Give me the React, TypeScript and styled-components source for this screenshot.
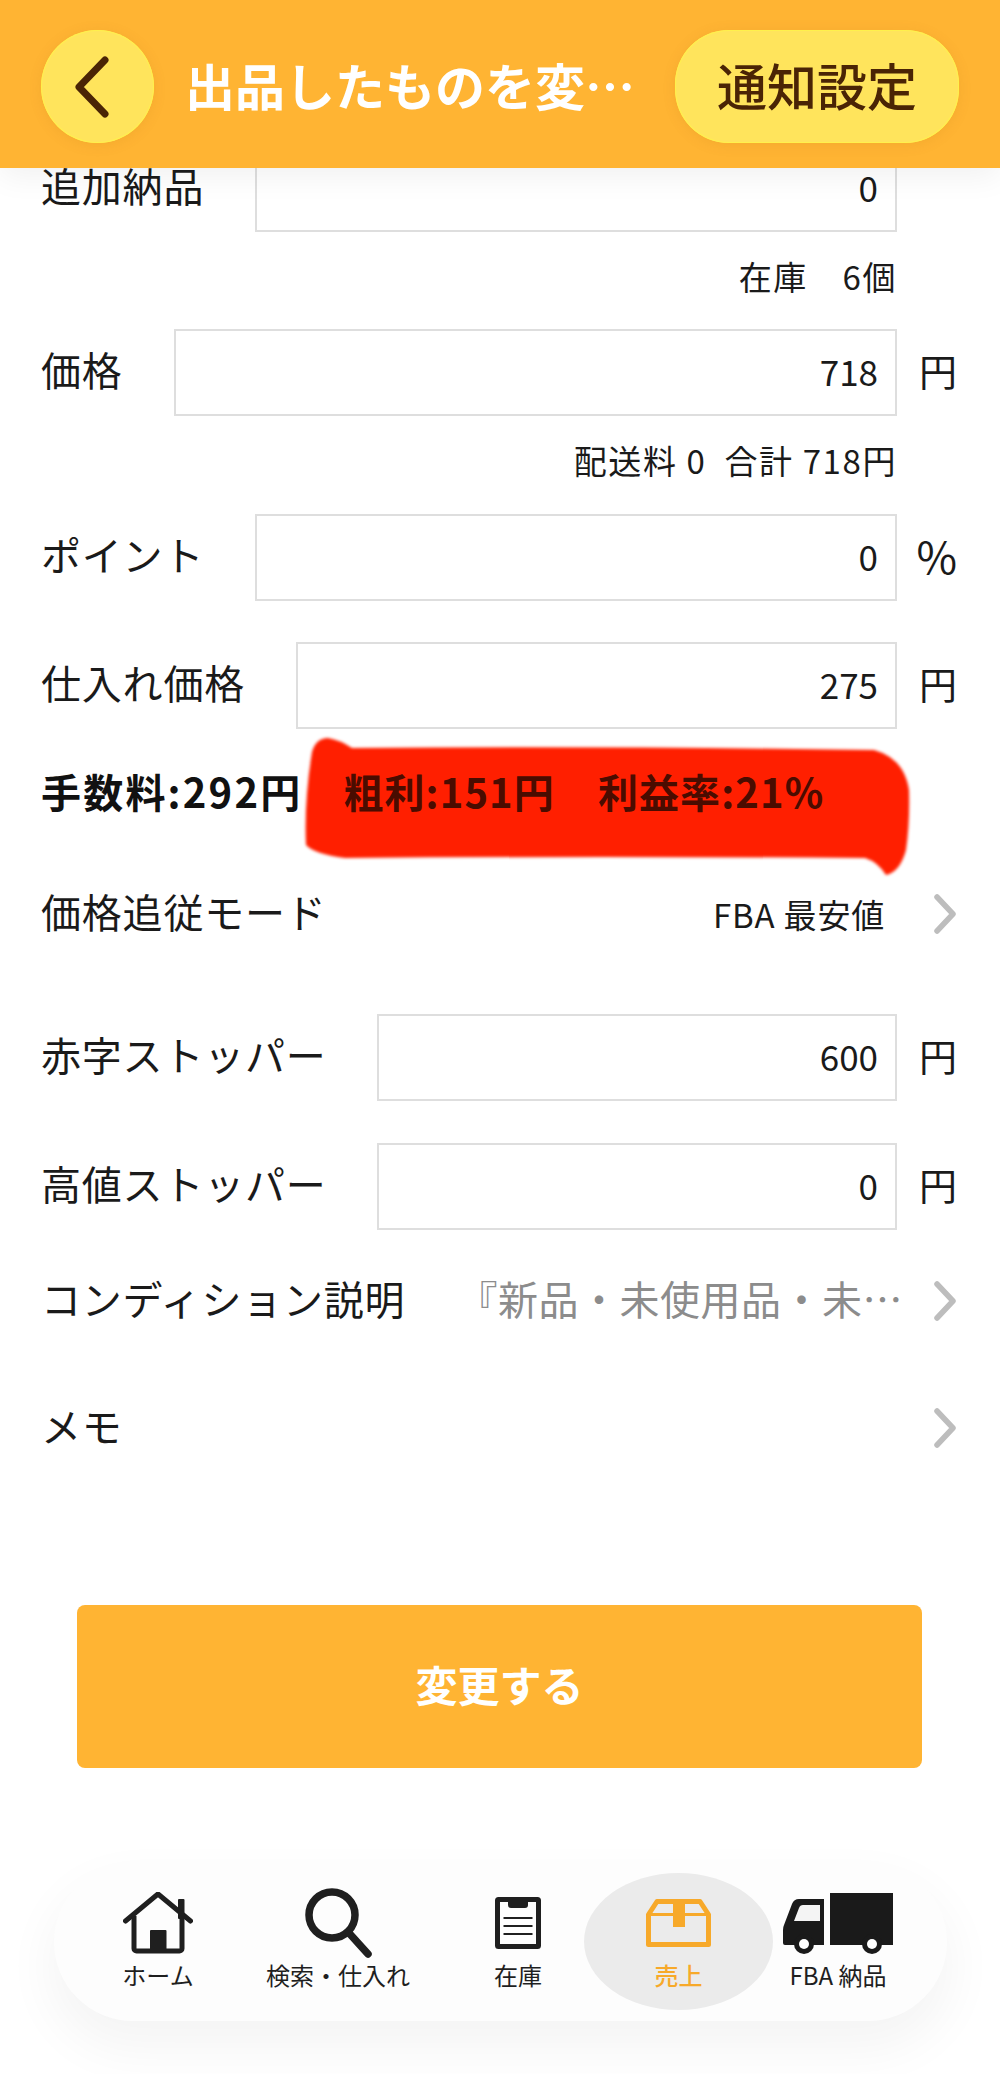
import React from 'react';
import styled, { createGlobalStyle } from 'styled-components';

const GlobalStyle = createGlobalStyle`
  html, body {
    margin: 0;
    padding: 0;
    background: #fff;
  }
  body {
    font-family: "Noto Sans CJK JP", "Noto Sans", sans-serif;
    color: #1a1a1a;
  }
`;

const Page = styled.div`
  width: 1000px;
  height: 2074px;
  overflow: hidden;
  display: flex;
  flex-direction: column;
  background: #fff;
`;

const Header = styled.header`
  position: relative;
  z-index: 2;
  flex: none;
  height: 168px;
  padding: 30px 41px 25px;
  box-sizing: border-box;
  display: flex;
  align-items: stretch;
  background: #ffb433;
  box-shadow: 0 8px 30px rgba(0, 0, 0, 0.06);
`;

const BackButton = styled.div`
  width: 113px;
  flex: none;
  border-radius: 50%;
  background: #ffe45c;
  box-shadow: 0 0 0 1px #fff04d inset, 0 2px 14px rgba(150, 90, 0, 0.1);
  display: flex;
  align-items: center;
  justify-content: center;
  padding-right: 12px;
  box-sizing: border-box;
`;

const Title = styled.div`
  margin-left: 31px;
  flex: none;
  align-self: center;
  padding-bottom: 6px;
  color: #fff;
  font-size: 50px;
  font-weight: 700;
  line-height: 60px;
  white-space: nowrap;
`;

const NotifyButton = styled.div`
  margin-left: auto;
  width: 284px;
  flex: none;
  padding-bottom: 5px;
  box-sizing: border-box;
  border-radius: 54px;
  background: #ffe45c;
  box-shadow: 0 0 0 1px #fff04d inset, 0 2px 14px rgba(150, 90, 0, 0.1);
  color: #4a2405;
  font-size: 50px;
  font-weight: 500;
  display: flex;
  align-items: center;
  justify-content: center;
`;

const Form = styled.main`
  flex: none;
  margin-top: -23px;
  padding: 0 43px 0 41px;
  display: flex;
  flex-direction: column;
`;

const FieldRow = styled.div<{ $top?: number; $inputLeft: number }>`
  margin-top: ${(p) => p.$top ?? 0}px;
  height: 87px;
  display: grid;
  grid-template-columns: ${(p) => p.$inputLeft - 41}px ${(p) => 897 - p.$inputLeft}px 1fr;
  align-items: center;
`;

const Label = styled.div`
  padding-bottom: 7px;
  font-size: 40px;
  letter-spacing: 0.8px;
  line-height: 60px;
  white-space: nowrap;
`;

const Input = styled.div`
  height: 87px;
  box-sizing: border-box;
  padding: 0 17px 5px 0;
  border: 2px solid #dedede;
  background: #fff;
  font-size: 35px;
  display: flex;
  align-items: center;
  justify-content: flex-end;
`;

const Unit = styled.div<{ $large?: boolean }>`
  justify-self: end;
  padding-bottom: 6px;
  font-size: ${(p) => (p.$large ? 44 : 38)}px;
`;

const Note = styled.div<{ $top: number }>`
  margin-top: ${(p) => p.$top}px;
  padding-right: 60px;
  height: 44px;
  font-size: 33px;
  letter-spacing: 1.6px;
  line-height: 44px;
  text-align: right;
  white-space: pre;
`;

const FeeRow = styled.div`
  position: relative;
  margin-top: 33px;
  height: 60px;
  padding-bottom: 2px;
  box-sizing: border-box;
  display: flex;
  align-items: center;
  font-size: 40px;
  font-weight: 700;
  white-space: nowrap;
`;

const Fee = styled.span<{ $left?: number; $marked?: boolean }>`
  position: relative;
  margin-left: ${(p) => p.$left ?? 0}px;
  letter-spacing: ${(p) => (p.$marked ? 1.1 : 2.2)}px;
  color: ${(p) => (p.$marked ? '#4a0c00' : '#111')};
`;

const Scribble = styled.svg`
  position: absolute;
  left: 259px;
  top: -30px;
  width: 620px;
  height: 150px;
  overflow: visible;
  filter: blur(1.5px);
`;

const LinkRow = styled.div<{ $top: number }>`
  margin-top: ${(p) => p.$top}px;
  height: 60px;
  display: flex;
  align-items: center;
`;

const LinkValue = styled.div<{ $muted?: boolean }>`
  margin-left: auto;
  padding-bottom: ${(p) => (p.$muted ? 6 : 0)}px;
  font-size: ${(p) => (p.$muted ? 40 : 33)}px;
  letter-spacing: ${(p) => (p.$muted ? 0.5 : 0.8)}px;
  color: ${(p) => (p.$muted ? '#8c8c8c' : '#1a1a1a')};
  white-space: nowrap;
`;

const ChevronSvg = styled.svg<{ $gap: number }>`
  flex: none;
  margin-left: ${(p) => p.$gap}px;
  width: 24px;
  height: 40px;
`;

const SubmitButton = styled.div`
  margin: 147px 78px 0 77px;
  height: 163px;
  padding-bottom: 6px;
  box-sizing: border-box;
  border-radius: 8px;
  background: #ffb433;
  color: #fff;
  font-size: 42px;
  font-weight: 700;
  display: flex;
  align-items: center;
  justify-content: center;
`;

const Nav = styled.nav`
  margin: 95px 53px 0 54px;
  height: 158px;
  border-radius: 79px;
  background: #fdfdfd;
  box-shadow: 0 24px 50px 6px rgba(0, 0, 0, 0.045);
  display: grid;
  grid-template-columns: 188px 172px 160px 189px 1fr;
  padding: 10px 44px 11px 10px;
  box-sizing: border-box;
`;

const NavItem = styled.div<{ $active?: boolean; $inset?: number }>`
  padding-left: ${(p) => p.$inset ?? 0}px;
  border-radius: 50%;
  background: ${(p) => (p.$active ? '#ebebeb' : 'transparent')};
  color: ${(p) => (p.$active ? '#f7a92a' : '#1f1f1f')};
  font-size: 24px;
  font-weight: ${(p) => (p.$active ? 500 : 400)};
  display: flex;
  flex-direction: column;
  align-items: center;
  white-space: nowrap;
`;

const IconSlot = styled.div`
  height: 74px;
  margin-top: 13px;
  display: flex;
  align-items: center;
  justify-content: center;
`;

const NavLabel = styled.div`
  margin-top: -2px;
  line-height: 34px;
`;

const Chevron = ({ gap }: { gap: number }) => (
  <ChevronSvg $gap={gap} viewBox="0 0 24 40">
    <path d="M4 3l16 17L4 37" fill="none" stroke="#bdbdbd" strokeWidth="5.5" strokeLinecap="round" strokeLinejoin="round" />
  </ChevronSvg>
);

const HomeIcon = () => (
  <svg width="70" height="62" viewBox="0 0 70 62">
    <rect x="55" y="7" width="6.5" height="20" rx="1" fill="#1f1f1f" />
    <path d="M2.500 29L35 2l32.500 27" fill="none" stroke="#1f1f1f" strokeWidth="5" strokeLinecap="round" strokeLinejoin="round" />
    <path d="M11 24v32.500a2.500 2.500 0 0 0 2.500 2.500h43a2.500 2.500 0 0 0 2.500-2.500V24" fill="none" stroke="#1f1f1f" strokeWidth="5" />
    <rect x="27" y="38" width="16.500" height="21" rx="1" fill="#1f1f1f" />
  </svg>
);

const SearchIcon = () => (
  <svg width="67" height="71" viewBox="0 0 67 71">
    <circle cx="27" cy="27" r="23" fill="none" stroke="#1f1f1f" strokeWidth="7.500" />
    <path d="M44 45l19 21" fill="none" stroke="#1f1f1f" strokeWidth="7.500" strokeLinecap="round" />
  </svg>
);

const StockIcon = () => (
  <svg width="46" height="52" viewBox="0 0 46 52">
    <rect x="2.500" y="2.500" width="41" height="47" rx="1" fill="none" stroke="#1f1f1f" strokeWidth="5" />
    <path d="M13 1h20v7a3 3 0 0 1-3 3H16a3 3 0 0 1-3-3z" fill="#1f1f1f" />
    <path d="M8.500 21h29M8.500 29h29M8.500 37h29" stroke="#1f1f1f" strokeWidth="2" />
  </svg>
);

const BoxIcon = () => (
  <svg width="65" height="48" viewBox="0 0 65 48">
    <path d="M2.500 15.500L11 2.500h43l8.500 13v30h-60z" fill="none" stroke="#f7a92a" strokeWidth="5" strokeLinejoin="round" />
    <path d="M2.500 15.500h60" stroke="#f7a92a" strokeWidth="3" />
    <rect x="27" y="1" width="12" height="27" fill="#f7a92a" />
  </svg>
);

const TruckIcon = () => (
  <svg width="110" height="61" viewBox="0 0 110 61">
    <rect x="47" y="0" width="63" height="52" fill="#1a1a1a" />
    <path d="M41 6v46H2a2 2 0 0 1-2-2V37q0-3 1-5L9 11q2-5 7-5z" fill="#1a1a1a" />
    <path d="M37 12v16H11l5-13q1-3 4-3z" fill="#f4f4f4" />
    <circle cx="21" cy="51" r="10" fill="#1a1a1a" />
    <circle cx="21" cy="51" r="5" fill="#fff" />
    <circle cx="89" cy="51" r="10" fill="#1a1a1a" />
    <circle cx="89" cy="51" r="5" fill="#fff" />
  </svg>
);

export default function App() {
  return (
    <Page>
      <GlobalStyle />
      <Header>
        <BackButton>
          <svg width="36" height="62" viewBox="0 0 36 62">
            <path d="M31 4L5 31l26 27" fill="none" stroke="#4a2405" strokeWidth="7" strokeLinecap="round" strokeLinejoin="round" />
          </svg>
        </BackButton>
        <Title>出品したものを変…</Title>
        <NotifyButton>通知設定</NotifyButton>
      </Header>

      <Form>
        <FieldRow $inputLeft={255}>
          <Label>追加納品</Label>
          <Input>0</Input>
        </FieldRow>
        <Note $top={22}>在庫　6個</Note>

        <FieldRow $top={31} $inputLeft={174}>
          <Label>価格</Label>
          <Input>718</Input>
          <Unit>円</Unit>
        </FieldRow>
        <Note $top={22}>配送料 0  合計 718円</Note>

        <FieldRow $top={32} $inputLeft={255}>
          <Label>ポイント</Label>
          <Input>0</Input>
          <Unit $large>%</Unit>
        </FieldRow>

        <FieldRow $top={41} $inputLeft={296}>
          <Label>仕入れ価格</Label>
          <Input>275</Input>
          <Unit>円</Unit>
        </FieldRow>

        <FeeRow>
          <Scribble viewBox="0 0 620 150">
            <path
              d="M12 20 Q16 6 28 6 Q40 8 52 16 Q300 14 574 18 Q604 26 609 58 Q610 90 606 118 Q600 140 586 143 Q578 130 565 126 Q300 124 45 126 Q14 122 6 113 Q4 70 12 20Z"
              fill="#ff1f00"
            />
          </Scribble>
          <Fee>手数料:292円</Fee>
          <Fee $left={41} $marked>粗利:151円</Fee>
          <Fee $left={43} $marked>利益率:21%</Fee>
        </FeeRow>

        <LinkRow $top={62}>
          <Label>価格追従モード</Label>
          <LinkValue>FBA 最安値</LinkValue>
          <Chevron gap={48} />
        </LinkRow>

        <FieldRow $top={70} $inputLeft={377}>
          <Label>赤字ストッパー</Label>
          <Input>600</Input>
          <Unit>円</Unit>
        </FieldRow>

        <FieldRow $top={42} $inputLeft={377}>
          <Label>高値ストッパー</Label>
          <Input>0</Input>
          <Unit>円</Unit>
        </FieldRow>

        <LinkRow $top={41}>
          <Label>コンディション説明</Label>
          <LinkValue $muted>『新品・未使用品・未…</LinkValue>
          <Chevron gap={30} />
        </LinkRow>

        <LinkRow $top={67}>
          <Label>メモ</Label>
          <LinkValue />
          <Chevron gap={0} />
        </LinkRow>
      </Form>

      <SubmitButton>変更する</SubmitButton>

      <Nav>
        <NavItem>
          <IconSlot><HomeIcon /></IconSlot>
          <NavLabel>ホーム</NavLabel>
        </NavItem>
        <NavItem>
          <IconSlot><SearchIcon /></IconSlot>
          <NavLabel>検索・仕入れ</NavLabel>
        </NavItem>
        <NavItem $inset={28}>
          <IconSlot><StockIcon /></IconSlot>
          <NavLabel>在庫</NavLabel>
        </NavItem>
        <NavItem $active>
          <IconSlot><BoxIcon /></IconSlot>
          <NavLabel>売上</NavLabel>
        </NavItem>
        <NavItem>
          <IconSlot><TruckIcon /></IconSlot>
          <NavLabel>FBA 納品</NavLabel>
        </NavItem>
      </Nav>
    </Page>
  );
}
